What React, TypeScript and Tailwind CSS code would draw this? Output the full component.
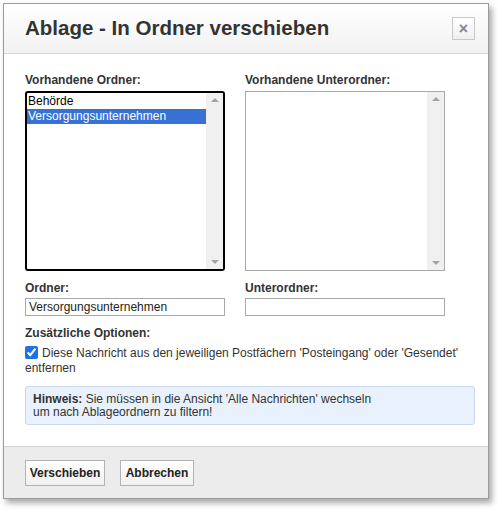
import { useState } from "react";

const font = { fontFamily: '"Liberation Sans", Arial, sans-serif' };

function ListBox({ items, selected, focused }: { items: string[]; selected?: number; focused?: boolean }) {
  return (
    <div
      className={
        "flex h-[180px] w-[200px] overflow-hidden bg-white " +
        (focused ? "rounded-[3px] border-2 border-black" : "border border-[#a9a9a9]")
      }
    >
      <ul className="flex-1 pt-px text-[12px] leading-[15px] text-black">
        {items.map((it, i) => (
          <li key={it} className={i === selected ? "bg-[#3871d4] pl-px text-white" : "pl-px"}>
            {it}
          </li>
        ))}
      </ul>
      <div className="flex w-[17px] flex-col items-center justify-between bg-[#f0f0f0] py-[5px]">
        <span className="h-0 w-0 border-x-[4px] border-b-[4px] border-x-transparent border-b-[#a3a3a3]" />
        <span className="h-0 w-0 border-x-[4px] border-t-[4px] border-x-transparent border-t-[#a3a3a3]" />
      </div>
    </div>
  );
}

export default function App() {
  const [checked, setChecked] = useState(true);

  return (
    <div className="h-[513px] w-[503px] bg-white pl-[3px] pt-[3px]" style={font}>
      <div className="flex h-[496px] w-[486px] flex-col border border-[#9c9c9c] bg-white shadow-[3px_4px_6px_rgba(0,0,0,0.35)]">
        <div className="flex h-[50px] items-center justify-between border-b border-[#d6d6d6] bg-gradient-to-b from-white to-[#f2f2f2] pl-[21px] pr-[13px]">
          <h1 className="text-[20.5px] font-bold text-[#333]">Ablage - In Ordner verschieben</h1>
          <button className="flex h-[23px] w-[23px] items-center justify-center border border-[#c8c8c8] bg-gradient-to-b from-white to-[#f0f0f0] text-[16px] font-bold leading-none text-[#888]">
            ×
          </button>
        </div>

        <div className="flex-1 px-[21px] pt-[19px] text-[#333]">
          <div className="grid grid-cols-[200px_200px] gap-x-[20px]">
            <div>
              <div className="mb-[4px] text-[12px] font-bold leading-[14px]">Vorhandene Ordner:</div>
              <ListBox items={["Behörde", "Versorgungsunternehmen"]} selected={1} focused />
            </div>
            <div>
              <div className="mb-[4px] text-[12px] font-bold leading-[14px]">Vorhandene Unterordner:</div>
              <ListBox items={[]} />
            </div>
            <div className="mt-[10px]">
              <div className="mb-[3px] text-[12px] font-bold leading-[14px]">Ordner:</div>
              <input
                readOnly
                value="Versorgungsunternehmen"
                className="block h-[18px] w-[200px] border border-[#a9a9a9] px-[3px] text-[12px] text-[#222] outline-none"
              />
            </div>
            <div className="mt-[10px]">
              <div className="mb-[3px] text-[12px] font-bold leading-[14px]">Unterordner:</div>
              <input className="block h-[18px] w-[200px] border border-[#a9a9a9] px-[3px] text-[12px] outline-none" />
            </div>
          </div>

          <div className="mt-[10px] text-[12px] font-bold leading-[14px]">Zusätzliche Optionen:</div>
          <label className="mt-[6px] block text-[12px] leading-[15px] text-[#333]">
            <input
              type="checkbox"
              checked={checked}
              onChange={(e) => setChecked(e.target.checked)}
              className="mr-[4px] h-[13px] w-[13px] align-[-2px] accent-[#1a73e8]"
            />
            Diese Nachricht aus den jeweiligen Postfächern 'Posteingang' oder 'Gesendet' entfernen
          </label>

          <div className="mt-[10px] w-[450px] rounded-[3px] border border-[#c9d8ec] bg-[#e8f1fc] px-[7px] pb-[5px] pt-[6px] text-[12px] leading-[13px] text-[#333]">
            <b>Hinweis:</b> Sie müssen in die Ansicht 'Alle Nachrichten' wechseln
            <br />
            um nach Ablageordnern zu filtern!
          </div>
        </div>

        <div className="flex h-[52px] items-center gap-[15px] border-t border-[#d4d4d4] bg-[#ececec] px-[21px]">
          <button className="h-[26px] w-[80px] border border-[#b3b3b3] bg-gradient-to-b from-white to-[#f0f0f0] text-[12px] font-bold text-[#222]">
            Verschieben
          </button>
          <button className="h-[26px] w-[74px] border border-[#b3b3b3] bg-gradient-to-b from-white to-[#f0f0f0] text-[12px] font-bold text-[#222]">
            Abbrechen
          </button>
        </div>
      </div>
    </div>
  );
}
